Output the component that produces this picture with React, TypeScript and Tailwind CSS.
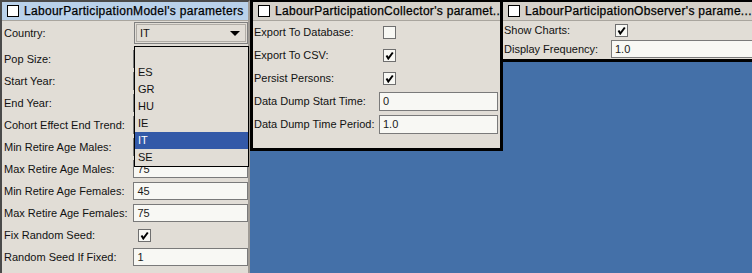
import React from 'react';

const Check = ({ checked }: { checked?: boolean }) => (
    <span className="w-[13px] h-[13px] border border-[#6f6f6f] bg-[#f8f8f4] flex items-center justify-center shrink-0">
        {checked && (
            <svg width="9" height="9" viewBox="0 0 9 9">
                <path d="M1.5 4.5 L3.3 7.5 L7.8 1.5" stroke="#000" strokeWidth="2" fill="none" />
            </svg>
        )}
    </span>
);

const Field = ({ value, h = 'h-[18px]' }: { value: string; h?: string }) => (
    <div className={`flex-1 ${h} border border-[#7a7a7a] bg-[#f8f8f4] flex items-center px-[3px] text-[#1a1a1a]`}>{value}</div>
);

const TitleBar = ({ title, active }: { title: string; active?: boolean }) => (
    <div className={`h-[19px] flex items-center gap-[5px] px-[5px] border-b border-[#a9a59e] ${active ? 'bg-[#b9d1ea]' : 'bg-[#d5d1ca]'}`}>
        <span className="w-[12px] h-[12px] border border-black bg-white shrink-0" />
        <span className="text-[12px] tracking-[0.3px] text-black whitespace-nowrap [-webkit-text-stroke:0.25px_#000]">{title}</span>
    </div>
);

const countries = ['', 'ES', 'GR', 'HU', 'IE', 'IT', 'SE'];

export default function App() {
    const model: [string, string][] = [
        ['Pop Size:', ''],
        ['Start Year:', ''],
        ['End Year:', ''],
        ['Cohort Effect End Trend:', ''],
        ['Min Retire Age Males:', ''],
        ['Max Retire Age Males:', '75'],
        ['Min Retire Age Females:', '45'],
        ['Max Retire Age Females:', '75'],
    ];

    return (
        <div className="w-[752px] h-[273px] bg-[#4470a8] flex items-start overflow-hidden font-['Liberation_Sans',Arial,sans-serif] text-[11px] text-[#111]">
            {/* model frame (selected) */}
            <div className="relative w-[250px] h-[290px] shrink-0 bg-[#e1ddd6] border-l-2 border-t-2 border-r-2 border-l-[#4a4a4a] border-t-[#4a4a4a] border-r-[#a09c96]">
                <TitleBar title="LabourParticipationModel's parameters" active />
                <div className="h-[27px] flex items-start pt-px">
                    <div className="w-[132px] pl-[2px] h-[22px] flex items-center">Country:</div>
                    <div className="w-[114px] h-[22px] border border-[#808080] p-px">
                        <div className="h-full border border-[#b0aca6] flex items-center pl-[3px] pr-[5px]">
                            <span className="flex-1">IT</span>
                            <svg width="10" height="5" viewBox="0 0 10 5"><path d="M0 0 H10 L5 5 Z" fill="#000" /></svg>
                        </div>
                    </div>
                </div>
                {model.map(([label, value]) => (
                    <div key={label} className="h-[22px] flex items-center">
                        <div className="w-[132px] pl-[2px]">{label}</div>
                        <div className="w-[115px] flex"><Field value={value} /></div>
                    </div>
                ))}
                <div className="h-[22px] flex items-center">
                    <div className="w-[136px] pl-[2px]">Fix Random Seed:</div>
                    <Check checked />
                </div>
                <div className="h-[22px] flex items-center">
                    <div className="w-[132px] pl-[2px]">Random Seed If Fixed:</div>
                    <div className="w-[115px] flex"><Field value="1" /></div>
                </div>

                {/* open dropdown list */}
                <div className="absolute left-[132px] top-[44px] w-[115px] border border-black bg-[#e1ddd6]">
                    {countries.map(c => (
                        <div key={c || 'blank'} className={`h-[17px] flex items-center pl-[3px] ${c === 'IT' ? 'bg-[#3359a8] text-white' : ''}`}>{c}</div>
                    ))}
                </div>
            </div>

            {/* collector frame */}
            <div className="w-[253px] h-[151px] shrink-0 bg-[#e1ddd6] border-[3px] border-t-2 border-black">
                <TitleBar title="LabourParticipationCollector's paramet..." />
                <div className="h-[23px] flex items-center">
                    <div className="w-[130px] pl-px">Export To Database:</div>
                    <Check />
                </div>
                <div className="h-[23px] flex items-center">
                    <div className="w-[130px] pl-px">Export To CSV:</div>
                    <Check checked />
                </div>
                <div className="h-[23px] flex items-center">
                    <div className="w-[130px] pl-px">Persist Persons:</div>
                    <Check checked />
                </div>
                <div className="h-[23px] flex items-center">
                    <div className="w-[126px] pl-px">Data Dump Start Time:</div>
                    <div className="w-[119px] flex"><Field value="0" h="h-[19px]" /></div>
                </div>
                <div className="h-[23px] flex items-center">
                    <div className="w-[126px] pl-px">Data Dump Time Period:</div>
                    <div className="w-[119px] flex"><Field value="1.0" h="h-[19px]" /></div>
                </div>
            </div>

            {/* observer frame */}
            <div className="flex-1 h-[62px] -ml-[3px] bg-[#e1ddd6] border-[3px] border-t-2 border-black">
                <TitleBar title="LabourParticipationObserver's parame..." />
                <div className="h-[19px] flex items-center">
                    <div className="w-[112px] pl-px">Show Charts:</div>
                    <Check checked />
                </div>
                <div className="h-[18px] flex items-center pr-px">
                    <div className="w-[108px] pl-px">Display Frequency:</div>
                    <Field value="1.0" />
                </div>
            </div>
        </div>
    );
}
